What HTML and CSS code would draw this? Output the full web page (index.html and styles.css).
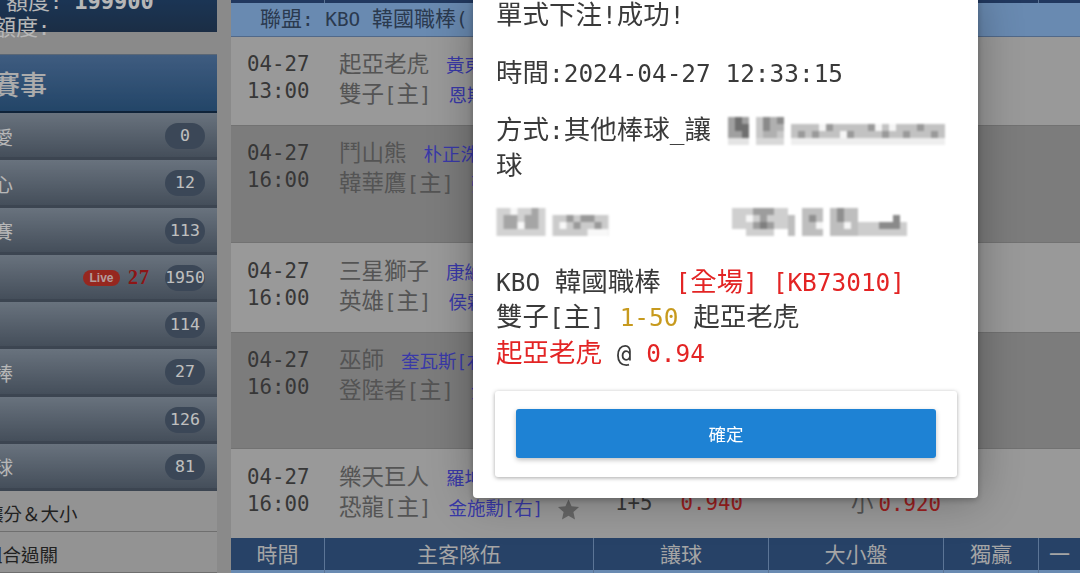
FILE: index.html
```html
<!DOCTYPE html>
<html lang="zh-Hant">
<head>
    <meta charset="UTF-8">
    <meta name="viewport" content="width=device-width, initial-scale=1.0">
    <title>單式下注</title>
    <link rel="stylesheet" href="styles.css">
</head>
<body>
    <div class="page">
        <aside class="sidebar">
            <div class="account">
                <div class="account-line">額度<span class="n">:</span><b class="n">199900</b></div>
                <div class="account-line account-cut">額度<span class="n">:</span></div>
            </div>

            <div class="side-title">賽事</div>

            <div class="side-item"><span class="side-label">最愛</span><span class="badge">0</span></div>
            <div class="side-item"><span class="side-label">關心</span><span class="badge">12</span></div>
            <div class="side-item"><span class="side-label">今賽</span><span class="badge">113</span></div>
            <div class="side-item">
                <span class="side-label"></span>
                <span class="live">Live</span><span class="live-count">27</span>
                <span class="badge">1950</span>
            </div>
            <div class="side-item"><span class="side-label"></span><span class="badge">114</span></div>
            <div class="side-item"><span class="side-label">棒</span><span class="badge">27</span></div>
            <div class="side-item"><span class="side-label"></span><span class="badge">126</span></div>
            <div class="side-item"><span class="side-label">網球</span><span class="badge">81</span></div>

            <div class="side-link side-link-first"><span class="side-link-text">讓分＆大小</span></div>
            <div class="side-link"><span class="side-link-text side-link-text-b">組合過關</span></div>
        </aside>

        <main class="board">
            <div class="head-strip"><span></span><span></span><span></span></div>
            <div class="league">聯盟<span class="n">: KBO </span>韓國職棒<span class="n">(</span></div>

            <div class="game game-first">
                <div class="time"><span class="n">04-27</span><br><span class="n">13:00</span></div>
                <div class="teams">
                    <div>起亞老虎<span class="pitcher">黃東河<span class="n">[</span>右<span class="n">]</span></span></div>
                    <div>雙子<span class="n">[</span>主<span class="n">]</span><span class="pitcher">恩斯<span class="n">[</span>右<span class="n">]</span></span></div>
                </div>
            </div>

            <div class="game game-tall">
                <div class="time"><span class="n">04-27</span><br><span class="n">16:00</span></div>
                <div class="teams">
                    <div>鬥山熊<span class="pitcher">朴正洙<span class="n">[</span>右<span class="n">]</span></span></div>
                    <div>韓華鷹<span class="n">[</span>主<span class="n">]</span><span class="pitcher">張<span class="n">[</span>右<span class="n">]</span></span></div>
                </div>
            </div>

            <div class="game">
                <div class="time"><span class="n">04-27</span><br><span class="n">16:00</span></div>
                <div class="teams">
                    <div>三星獅子<span class="pitcher">康納<span class="n">[</span>右<span class="n">]</span></span></div>
                    <div>英雄<span class="n">[</span>主<span class="n">]</span><span class="pitcher">侯霖<span class="n">[</span>右<span class="n">]</span></span></div>
                </div>
            </div>

            <div class="game game-tall">
                <div class="time"><span class="n">04-27</span><br><span class="n">16:00</span></div>
                <div class="teams">
                    <div>巫師<span class="pitcher">奎瓦斯<span class="n">[</span>右<span class="n">]</span></span></div>
                    <div>登陸者<span class="n">[</span>主<span class="n">]</span><span class="pitcher">金<span class="n">[</span>右<span class="n">]</span></span></div>
                </div>
            </div>

            <div class="game">
                <div class="time"><span class="n">04-27</span><br><span class="n">16:00</span></div>
                <div class="teams">
                    <div>樂天巨人<span class="pitcher">羅坤<span class="n">[</span>右<span class="n">]</span></span></div>
                    <div>恐龍<span class="n">[</span>主<span class="n">]</span><span class="pitcher">金施勳<span class="n">[</span>右<span class="n">]</span></span>
                        <svg class="star" viewBox="0 0 24 24"><path d="M12 1.5l3.2 7.2 7.8.8-5.9 5.2 1.7 7.7-6.8-4-6.8 4 1.7-7.7L1 9.500l7.8-.8z"/></svg>
                    </div>
                </div>
                <div class="odds odds-spread"><span class="n">1+5</span><span class="n odds-red">0.940</span></div>
                <div class="odds odds-total">小<span class="n odds-red odds-gap">0.920</span></div>
            </div>

            <div class="foot-head">
                <div class="col-time">時間</div>
                <div class="col-teams">主客隊伍</div>
                <div class="col-spread">讓球</div>
                <div class="col-total">大小盤</div>
                <div class="col-win">獨贏</div>
                <div class="col-rest">一</div>
            </div>
            <div class="foot-strip"></div>
        </main>
    </div>

    <div class="overlay"></div>

    <div class="dialog">
        <p class="msg">單式下注<span class="n">!</span>成功<span class="n">!</span></p>
        <p class="msg">時間<span class="n">:2024-04-27 12:33:15</span></p>
        <div class="msg bet-row">
            <div>方式<span class="n">:</span>其他棒球<span class="n">_</span>讓球</div>
            <svg class="mosaic mosaic-a" viewBox="0 0 31 4">
                <path fill="#a0a0a0" d="M0 0h3v3H0z"/>
                <path fill="#6f6f6f" d="M1 0h1v1H1zM1 1h2v1H1zM2 2h1v1H2z"/>
                <path fill="#e4e4e4" d="M0 3h3v1H0z"/>
                <path fill="#c8c8c8" d="M4 0h1v3H4zM7 0h1v3H7z"/>
                <path fill="#8a8a8a" d="M5 0h1v1H5zM7 0h1v1H7zM5 1h1v1H5z"/>
                <path fill="#b0b0b0" d="M5 2h2v1H5zM6 1h2v1H6zM6 0h1v1H6z"/>
                <path fill="#d8d8d8" d="M4 3h4v1H4z"/>
                <path fill="#c2c2c2" d="M9 1h22v2H9z"/>
                <path fill="#999" d="M10 2h1v1h-1zM12 2h1v1h-1zM14 1h1v1h-1zM17 2h1v1h-1zM20 1h1v1h-1zM22 2h1v1h-1zM25 2h1v1h-1zM27 1h1v1h-1zM29 2h1v1h-1z"/>
                <path fill="#f6f6f6" d="M13 1h1v1h-1zM16 2h1v1h-1zM21 1h1v1h-1zM23 1h1v1h-1z"/>
                <path fill="#eee" d="M9 3h22v1H9z"/>
            </svg>
        </div>
        <div class="msg bet-row bet-row-b">
            <svg class="mosaic mosaic-b" viewBox="0 0 16 4">
                <path fill="#d2d2d2" d="M0 0h7v4H0z"/>
                <path fill="#a5a5a5" d="M1 1h2v2H1zM4 1h2v2H4zM5 0h1v1H5z"/>
                <path fill="#f8f8f8" d="M3 2h1v1H3zM2 0h1v1H2z"/>
                <path fill="#cbcbcb" d="M8 1h8v3H8z"/>
                <path fill="#999" d="M10 1h1v1h-1zM12 1h2v1h-2zM11 2h1v1h-1zM14 2h1v1h-1z"/>
                <path fill="#f8f8f8" d="M9 2h1v1H9zM13 3h3v1h-3z"/>
            </svg>
            <svg class="mosaic mosaic-c" viewBox="0 0 25 4">
                <path fill="#cfcfcf" d="M0 0h8v3H0zM2 3h4v1H2z"/>
                <path fill="#9d9d9d" d="M3 0h3v1H3zM3 2h3v1H3zM4 1h1v1H4z"/>
                <path fill="#7f7f7f" d="M4 2h1v1H4z"/>
                <path fill="#f6f6f6" d="M2 1h1v1H2z"/>
                <path fill="#bebebe" d="M8 1h1v3H8zM10 0h3v4h-3zM14 0h4v4h-4z"/>
                <path fill="#8f8f8f" d="M11 1h1v1h-1zM15 0h1v2h-1z"/>
                <path fill="#f6f6f6" d="M16 2h1v1h-1zM12 2h1v1h-1z"/>
                <path fill="#cdcdcd" d="M18 2h7v2h-7z"/>
                <path fill="#8a8a8a" d="M21 2h3v1h-3zM23 1h1v1h-1z"/>
            </svg>
        </div>
        <p class="msg msg-last">
            <span class="n">KBO </span>韓國職棒<span class="n"> </span><span class="red"><span class="n">[</span>全場<span class="n">] [KB73010]</span></span><br>
            雙子<span class="n">[</span>主<span class="n">] </span><span class="n gold">1-50 </span>起亞老虎<br>
            <span class="red">起亞老虎</span><span class="n"> @ </span><span class="n red">0.94</span>
        </p>
        <div class="action-card">
            <button class="ok-button">確定</button>
        </div>
    </div>
</body>
</html>
```

FILE: styles.css
```css
* {
    margin: 0;
    padding: 0;
    box-sizing: border-box;
}
html, body {
    height: 573px;
    overflow: hidden;
}
body {
    background: #b8b8b8;
    font-family: "DejaVu Sans Mono", "Noto Sans CJK TC", monospace;
    color: #4f4f4f;
}
.n {
    font-size: .922em;
    line-height: 1;
}
.page {
    display: flex;
    height: 573px;
}

/* left column */
.sidebar {
    width: 217px;
    flex-shrink: 0;
}
.account {
    display: flow-root;
    height: 32px;
    margin-bottom: 22px;
    background: linear-gradient(#244771, #253d5c);
    color: #f5f5f5;
    font-size: 22px;
    line-height: 25px;
}
.account-line {
    margin-top: -11px;
    padding-left: 6px;
    white-space: nowrap;
    height: 25px;
}
.account-line b {
    margin-left: 12px;
    font-size: 22px;
}
.account-cut {
    margin-top: 1px;
    margin-left: -6px;
    padding-left: 0;
}
.side-title {
    height: 59px;
    display: flex;
    align-items: center;
    padding-left: 0;
    background: linear-gradient(#547bab, #2f5d8b);
    border-bottom: 2px solid #152f4d;
    border-top: 1px solid #7a8a9c;
    color: #e6e6e6;
    font-size: 27px;
    font-weight: 500;
    text-indent: -7px;
    overflow: hidden;
    white-space: nowrap;
}
.side-item {
    display: flex;
    align-items: center;
    height: 47.25px;
    padding: 2px 12px 0 0;
    background: linear-gradient(#8c99a8, #5c6979);
    border-bottom: 3px solid #505c6c;
    color: #f5f5f5;
    font-size: 19px;
}
.side-label {
    margin-left: -6px;
    margin-right: auto;
    width: 19px;
    direction: rtl;
    white-space: nowrap;
}
.live {
    width: 37px;
    height: 16px;
    margin-right: 8px;
    border-radius: 8px;
    background: #c9342a;
    color: #f0d0d0;
    font: bold 12px/16px "Liberation Sans", sans-serif;
    text-align: center;
}
.live-count {
    margin-right: 15px;
    color: #bd1c1c;
    font: bold 20px "Liberation Serif", serif;
    letter-spacing: 1px;
}
.badge {
    width: 40px;
    height: 26px;
    border-radius: 13px;
    background: #4f5f74;
    color: #fff;
    font-size: 16.5px;
    line-height: 26px;
    text-align: center;
    white-space: nowrap;
}
.side-link {
    height: 41px;
    background: #c4c4c4;
    border-bottom: 1px solid #959595;
    color: #2d2d2d;
    font-size: 18.5px;
    line-height: 47px;
    white-space: nowrap;
    overflow: hidden;
}
.side-link-text {
    display: block;
    margin-left: -15px;
}
.side-link-text-b {
    margin-left: -16px;
}

/* match board */
.board {
    flex: 1;
    margin-left: 14px;
    min-width: 0;
}
.head-strip {
    height: 3px;
    display: grid;
    grid-template-columns: 93px 714px 1fr;
    background: #2d4b7f;
}
.head-strip span + span {
    border-left: 1px solid #7b9dc8;
}
.league {
    height: 33.6px;
    padding-left: 29px;
    background: #8db8ed;
    border-bottom: 1px solid #6d8db8;
    color: #394e6a;
    font-size: 21px;
    line-height: 32px;
    white-space: nowrap;
}
.game {
    display: grid;
    grid-template-columns: 94px 269px 175px 1fr;
    height: 88.7px;
    padding-top: 13px;
    background: #cccccc;
    font-size: 22.5px;
}
.game-first {
    padding-top: 12px;
}
.game-tall {
    height: 117.6px;
    padding-top: 12px;
    background: #a6a6a6;
    border-top: 1px solid #999;
    border-bottom: 1px solid #999;
}
.time {
    padding: 1px 0 0 16px;
    line-height: 27px;
    color: #4a4a4a;
}
.teams {
    padding-left: 14px;
    line-height: 30px;
    color: #717171;
    white-space: nowrap;
}
.pitcher {
    margin-left: 17px;
    color: #4d4de0;
    font-size: 18.5px;
    line-height: 1;
}
.star {
    width: 23px;
    height: 23px;
    fill: #888;
    vertical-align: -6px;
}
.odds {
    margin-top: 28px;
    line-height: 27px;
    white-space: nowrap;
    color: #4a4a4a;
}
.odds-spread {
    display: flex;
    align-items: center;
    height: 27px;
    padding-left: 21px;
    gap: 28px;
}
.odds-total {
    padding-left: 82px;
    color: #717171;
}
.odds-red {
    color: #d02b2b;
}
.odds-gap {
    margin-left: 5px;
}
.foot-head {
    display: grid;
    grid-template-columns: 93px 269px 175px 175px 95px 1fr;
    height: 32px;
    background: #35588a;
    color: #dcdcdc;
    font-size: 21px;
    line-height: 35px;
    text-align: center;
}
.foot-head div + div {
    border-left: 1px solid #7b9dc8;
}
.foot-strip {
    height: 3px;
    background: #8db8ed;
}

/* modal */
.overlay {
    position: fixed;
    inset: 0;
    background: rgba(0, 0, 0, .25);
}
.dialog {
    position: absolute;
    top: -3px;
    left: 473px;
    width: 505px;
    padding: 0 21px 21px 23px;
    border-radius: 4px;
    background: #fff;
    box-shadow: 0 0 45px rgba(0, 0, 0, .3), 0 2px 6px rgba(0, 0, 0, .25);
    color: #3a3a3a;
    font-size: 26.5px;
    line-height: 35.5px;
}
.msg {
    margin-bottom: 22px;
    white-space: nowrap;
}
.msg-last {
    margin-bottom: 21px;
}
.bet-row {
    display: grid;
    grid-template-columns: 232px 1fr;
}
.bet-row > div {
    white-space: normal;
    word-break: break-all;
}
.bet-row-b {
    height: 36.5px;
}
.mosaic {
    display: block;
    filter: blur(1.1px);
}
.mosaic-a {
    width: 217px;
    height: 28px;
    margin-top: 5px;
}
.mosaic-b {
    width: 119px;
    height: 28px;
    margin: 3px 0 0 -3px;
}
.mosaic-c {
    width: 183px;
    height: 28px;
    margin-top: 3px;
}
.red {
    color: #e32424;
}
.gold {
    color: #c79a1e;
}
.action-card {
    margin-left: -1px;
    padding: 18px 21px 19px;
    border-radius: 3px;
    background: #fff;
    box-shadow: 0 1px 4px rgba(0, 0, 0, .35);
}
.ok-button {
    display: block;
    width: 100%;
    height: 49px;
    border: none;
    border-radius: 3px;
    background: #1e82d4;
    box-shadow: 0 2px 5px rgba(0, 0, 0, .25);
    color: #fff;
    font-family: "Noto Sans CJK TC", sans-serif;
    font-size: 17.5px;
    cursor: pointer;
}
```
